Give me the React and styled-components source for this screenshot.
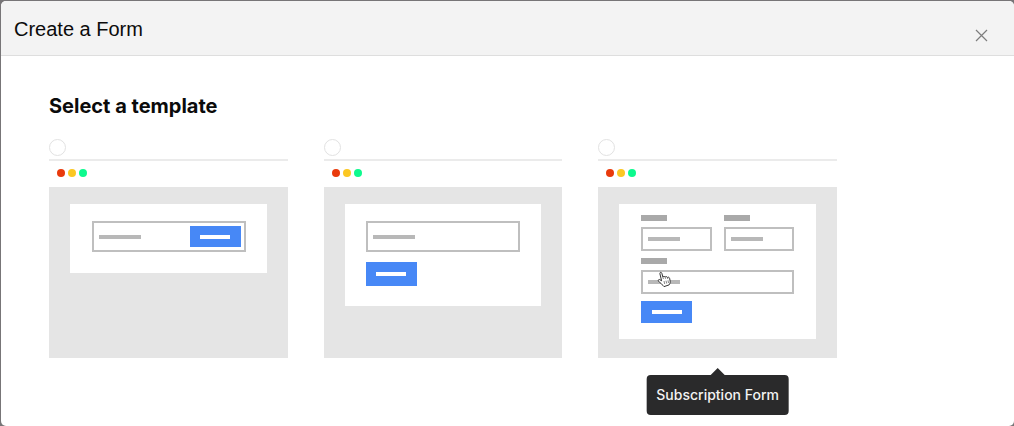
// App.jsx
import React, { useState } from 'react';
import styled, { createGlobalStyle } from 'styled-components';

const GlobalStyle = createGlobalStyle`
  * {
    box-sizing: border-box;
  }

  body {
    margin: 0;
    background-color: #777577;
    color: #0b0b0b;
    font-family: Inter, 'Liberation Sans', sans-serif;
  }
`;

const Backdrop = styled.div`
  display: flex;
  min-height: 100vh;
  padding: 1px 0 0 1px;
`;

const Modal = styled.section`
  flex: 1;
  background-color: #fff;
  border-radius: 5px;
  overflow: hidden;
`;

const Header = styled.header`
  display: flex;
  align-items: center;
  justify-content: space-between;
  height: 55px;
  padding: 2px 24px 0 13px;
  background-color: #f3f3f3;
  border-bottom: 1px solid #dedede;
`;

const Title = styled.h1`
  margin: 0;
  font-family: 'Liberation Sans', sans-serif;
  font-size: 20px;
  font-weight: 400;
  line-height: 28px;
`;

const CloseButton = styled.button`
  display: flex;
  margin-top: 12px;
  padding: 2px;
  border: 0;
  background: none;
  color: #7d7d7d;
  cursor: pointer;
`;

const Content = styled.div`
  padding: 36px 48px 0;
`;

const Heading = styled.h2`
  margin: 0 0 18px;
  font-size: 20px;
  font-weight: 700;
  line-height: 29px;
`;

const TemplateList = styled.div`
  display: grid;
  grid-template-columns: repeat(3, minmax(0, 1fr));
  gap: 36px;
  max-width: 788px;
`;

const Template = styled.label`
  position: relative;
  display: block;
  cursor: pointer;
`;

const Radio = styled.input`
  appearance: none;
  display: block;
  width: 17px;
  height: 17px;
  margin: 0 0 3px;
  border: 1px solid #e2e2e2;
  border-radius: 50%;
  background-color: #fff;

  &:checked {
    border: 5px solid #4788f6;
  }
`;

const WindowBar = styled.div`
  display: flex;
  align-items: center;
  gap: 3px;
  height: 28px;
  padding: 0 0 2px 8px;
  border-top: 2px solid #ebebeb;
`;

const Dot = styled.span`
  width: 8px;
  height: 8px;
  border-radius: 50%;
  background-color: ${props => props.$color};
`;

const Preview = styled.div`
  height: 171px;
  padding: 17px 21px;
  background-color: #e5e5e5;
`;

const Panel = styled.div`
  display: flex;
  flex-direction: column;
  gap: ${props => props.$gap || 0}px;
  padding: ${props => props.$padding};
  background-color: #fff;
`;

const Row = styled.div`
  display: grid;
  grid-template-columns: 1fr 1fr;
  gap: 12px;
`;

const Group = styled.div`
  display: flex;
  flex-direction: column;
  gap: 6px;
`;

const Label = styled.div`
  width: 26px;
  height: 6px;
  background-color: #a9a9a9;
`;

const Field = styled.div`
  display: flex;
  align-items: center;
  justify-content: space-between;
  height: ${props => props.$height}px;
  padding: 0 3px 0 5px;
  border: 2px solid #bfbfbf;
`;

const Placeholder = styled.span`
  width: ${props => props.$width}px;
  height: 4px;
  background-color: #b8b8b8;
`;

const Submit = styled.div`
  display: flex;
  align-items: center;
  justify-content: center;
  width: 51px;
  height: ${props => props.$height}px;
  background-color: #4788f6;

  &::after {
    content: '';
    width: 30px;
    height: 4px;
    background-color: #fff;
  }
`;

const Tooltip = styled.span`
  position: absolute;
  top: calc(100% + 17px);
  left: 50%;
  transform: translateX(-50%);
  padding: 10px;
  border-radius: 4px;
  background-color: #2a2a2b;
  color: #f2f2f2;
  font-size: 14px;
  font-weight: 500;
  line-height: 20px;
  white-space: nowrap;

  &::before {
    content: '';
    position: absolute;
    bottom: 100%;
    left: 50%;
    margin-left: -7px;
    border: 7px solid transparent;
    border-top: 0;
    border-bottom-color: #2a2a2b;
  }
`;

const Pointer = styled.svg`
  position: absolute;
  top: 132px;
  left: 59px;
  pointer-events: none;
`;

const InlineForm = () => (
  <Panel $padding="17px 21px 21px 22px">
    <Field $height={31}>
      <Placeholder $width={42} />
      <Submit $height={21} />
    </Field>
  </Panel>
);

const StackedForm = () => (
  <Panel $gap={10} $padding="17px 21px 20px">
    <Field $height={31}>
      <Placeholder $width={42} />
    </Field>
    <Submit $height={24} />
  </Panel>
);

const SubscriptionForm = () => (
  <Panel $gap={7} $padding="11px 22px 16px">
    <Row>
      <Group>
        <Label />
        <Field $height={24}>
          <Placeholder $width={32} />
        </Field>
      </Group>
      <Group>
        <Label />
        <Field $height={24}>
          <Placeholder $width={32} />
        </Field>
      </Group>
    </Row>
    <Group>
      <Label />
      <Field $height={24}>
        <Placeholder $width={32} />
      </Field>
    </Group>
    <Submit $height={22} />
  </Panel>
);

const templates = [
  { value: 'inline', label: 'Inline Form', form: <InlineForm /> },
  { value: 'stacked', label: 'Stacked Form', form: <StackedForm /> },
  { value: 'subscription', label: 'Subscription Form', form: <SubscriptionForm /> },
];

const HandPointer = () => (
  <Pointer width="15" height="17" viewBox="0 0 15 17" aria-hidden="true">
    <path
      d="M4.6 9.8 2.9 2.7C2.6 1.2 4.4.8 4.8 2.2L5.9 6.1C6.2 5.1 7.7 5 8.1 6.2 8.7 5.2 10 5.4 10.4 6.5 11.2 5.8 12.3 6.2 12.6 7.3L13.2 10.2C13.4 11.8 12.8 12.8 12.1 13.9L7 15.6C6.2 14.2 3.6 12.6 1.5 10.1.7 9 2 8.1 2.9 8.7Z"
      fill="#fff"
      stroke="#333"
      strokeLinejoin="round"
    />
    <path d="M5.9 6.1 6.4 8M8.1 6.2 8.5 7.8M10.4 6.5 10.8 8M7 10 7.7 13M9 9.7 9.7 12.5M11 9.3 11.5 12" fill="none" stroke="#666" strokeWidth=".8" />
  </Pointer>
);

const App = () => {
  const [selected, setSelected] = useState('');
  const [hovered, setHovered] = useState('subscription');

  return (
    <Backdrop>
      <GlobalStyle />
      <Modal role="dialog" aria-labelledby="modal-title">
        <Header>
          <Title id="modal-title">Create a Form</Title>
          <CloseButton type="button" aria-label="Close">
            <svg width="13" height="13" viewBox="0 0 13 13">
              <path d="M1 1 12 12M12 1 1 12" stroke="currentColor" strokeWidth="1.2" />
            </svg>
          </CloseButton>
        </Header>
        <Content>
          <Heading>Select a template</Heading>
          <TemplateList>
            {templates.map(template => (
              <Template key={template.value} onMouseEnter={() => setHovered(template.value)}>
                <Radio
                  type="radio"
                  name="template"
                  aria-label={template.label}
                  checked={selected === template.value}
                  onChange={() => setSelected(template.value)}
                />
                <WindowBar>
                  <Dot $color="#e93a0c" />
                  <Dot $color="#fbc723" />
                  <Dot $color="#0dfa8e" />
                </WindowBar>
                <Preview>{template.form}</Preview>
                {hovered === template.value && (
                  <>
                    <HandPointer />
                    <Tooltip role="tooltip">{template.label}</Tooltip>
                  </>
                )}
              </Template>
            ))}
          </TemplateList>
        </Content>
      </Modal>
    </Backdrop>
  );
};

export default App;
